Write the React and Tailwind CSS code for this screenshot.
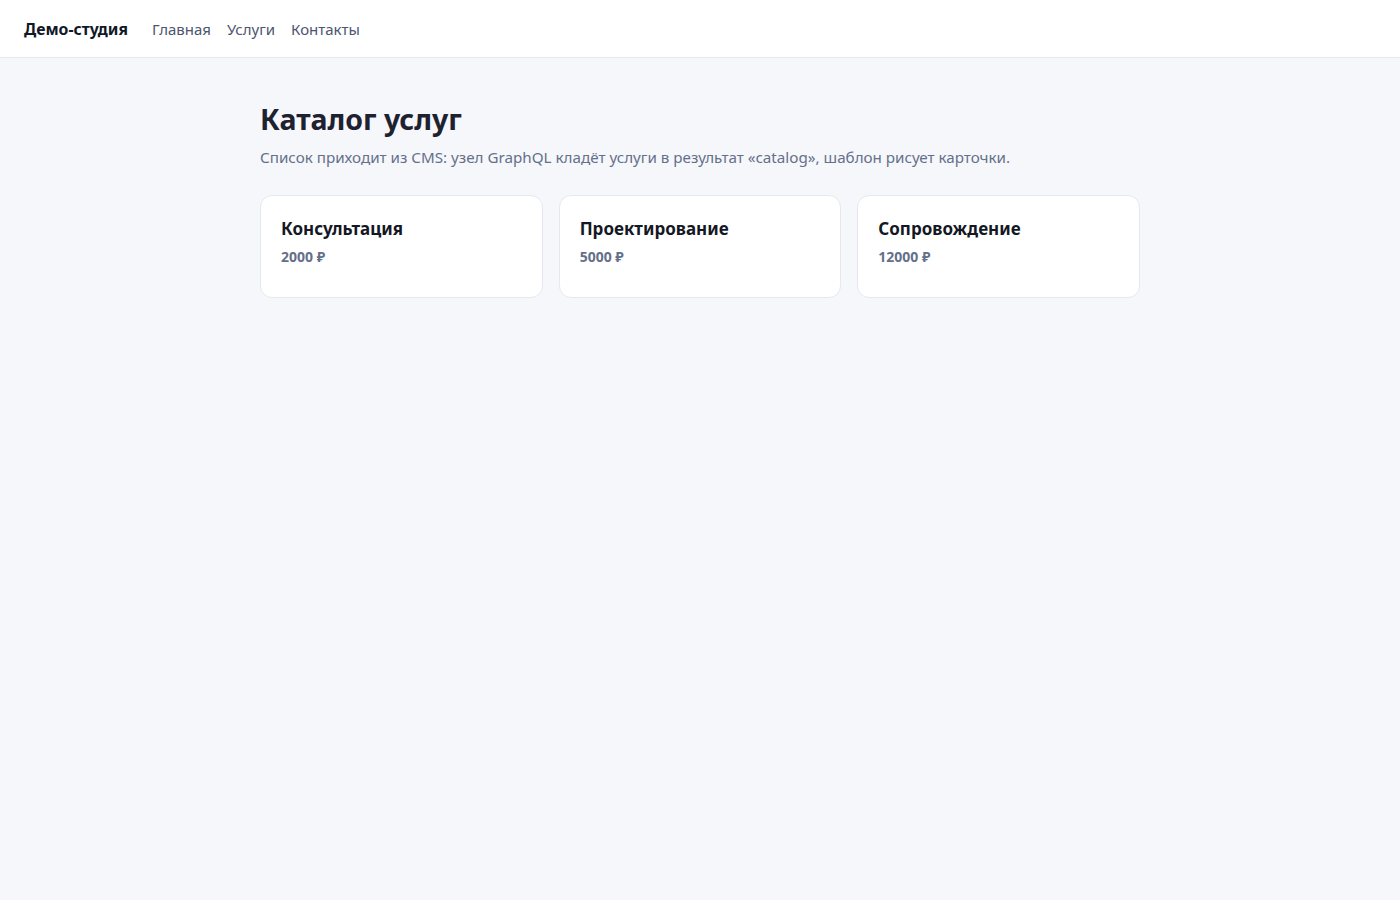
import React from 'react';

const services = [
  { id: 1, name: 'Консультация', price: 2000 },
  { id: 2, name: 'Проектирование', price: 5000 },
  { id: 3, name: 'Сопровождение', price: 12000 },
];

export default function App() {
  return (
    <div className="min-h-screen bg-[#f6f7fb] font-['Noto_Sans',sans-serif] text-[#1e2230]">
      {/* Header */}
      <header className="h-[58px] bg-white border-b border-[#e6e8ef] flex items-center px-6 pt-0.5">
        <span className="text-[15.75px] font-bold text-[#111827]">Демо-студия</span>
        <nav className="flex items-center gap-4 ml-6 text-[15px] text-[#4b5570]">
          <a href="#">Главная</a>
          <a href="#">Услуги</a>
          <a href="#">Контакты</a>
        </nav>
      </header>

      {/* Catalog */}
      <main className="max-w-[880px] mx-auto pt-10">
        <h1 className="text-[28.5px] font-bold leading-[42px] text-[#1e2230]">Каталог услуг</h1>
        <p className="mt-1.5 text-[15.2px] text-[#64708a]">
          Список приходит из CMS: узел GraphQL кладёт услуги в результат «catalog», шаблон рисует карточки.
        </p>
        <div className="grid grid-cols-3 gap-4 mt-[26px]">
          {services.map(s => (
            <div key={s.id} className="bg-white border border-[#e6e8ef] rounded-xl px-5 pt-[21px] pb-[30px]">
              <div className="text-[17px] leading-[24px] font-bold text-[#141824]">{s.name}</div>
              <div className="mt-1.5 text-[14px] leading-[20px] font-bold text-[#64708a]">{s.price} ₽</div>
            </div>
          ))}
        </div>
      </main>
    </div>
  );
}
